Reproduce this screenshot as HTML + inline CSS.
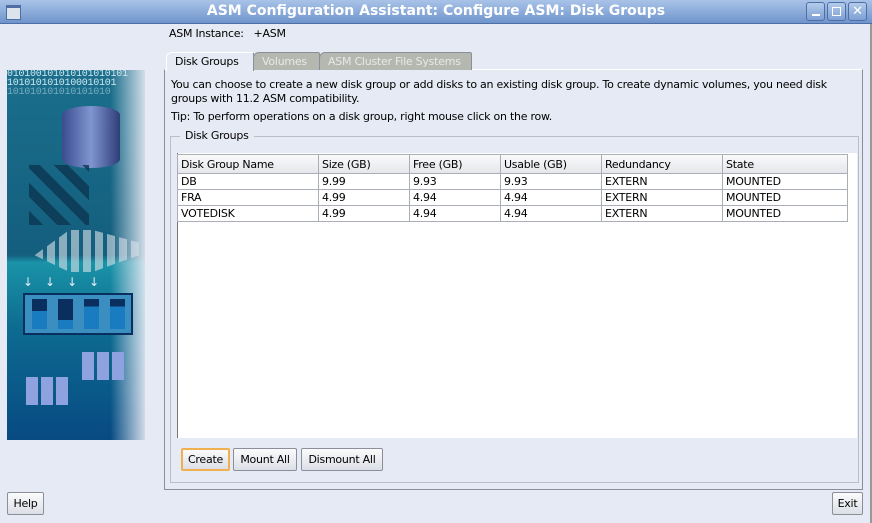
<!DOCTYPE html><html><head><style>
body{margin:0;width:872px;height:523px;background:#e6eaf4;font-family:"DejaVu Sans","Liberation Sans",sans-serif;font-size:11px;letter-spacing:-0.25px;color:#000;position:relative;overflow:hidden}
.a{position:absolute;white-space:nowrap}
.tb{left:0;top:0;width:872px;height:23px;background:linear-gradient(#a9c3e8,#6f94cc);border-bottom:1px solid #4d6fa6}
.tt{left:0;width:872px;top:3px;text-align:center;color:#fff;font-weight:bold;font-size:14px;letter-spacing:0}
.wb{top:2px;width:17px;height:17px;border:1px solid #4d6fa6;border-radius:3px;background:linear-gradient(#b4cbeb,#7d9fd3)}
.btn{border:1px solid #8a8f99;border-radius:2px;background:linear-gradient(#fbfbfc,#dcdfe6);height:21px;line-height:21px;text-align:center;font-size:11px}
.tab{top:52px;height:17px;line-height:17px;border:1px solid #8a8f99;border-bottom:none;background:#b5b8b0;color:#e8e8e8;padding:0 8px;border-radius:6px 2px 0 0}
table{border-collapse:collapse;position:absolute;left:177px;top:154px;font-size:11px}
td{border:1px solid #a9aeb8;height:15px;padding:0 3px;line-height:15px;white-space:nowrap}
</style></head><body>
<div class="a tb"></div>
<div class="a" style="left:6px;top:5px;width:13px;height:11px;border:1px solid #4d6fa6;background:#dde3ea;border-top:3px solid #4d6fa6"></div>
<div class="a tt">ASM Configuration Assistant: Configure ASM: Disk Groups</div>
<div class="a wb" style="left:806px"><div class="a" style="left:5px;top:11px;width:8px;height:2px;background:#fff"></div></div>
<div class="a wb" style="left:827px"><div class="a" style="left:4px;top:4px;width:7px;height:7px;border:1px solid #fff"></div></div>
<div class="a wb" style="left:848px;color:#fff;font-weight:bold;font-size:13px;text-align:center;line-height:17px">✕</div>
<div class="a" style="left:870px;top:24px;width:2px;height:499px;background:#999"></div>
<div class="a" style="left:169px;top:27px">ASM Instance:&nbsp;&nbsp; +ASM</div>
<!-- left image -->
<div class="a" style="left:7px;top:70px;width:138px;height:370px;background:linear-gradient(90deg,rgba(230,234,244,0) 75%,rgba(230,234,244,.9) 100%),linear-gradient(#1a6f8c 0%,#145e7e 50%,#1a93a8 52%,#0d6b90 70%,#074a82 100%)">
<div class="a" style="left:0;top:0;width:138px;font-family:'Liberation Mono',monospace;font-size:10px;color:#cfe8f0;line-height:9px;overflow:hidden;white-space:nowrap">010100101010101010101<br>1010101010100010101<br><span style="opacity:.5">101010101010101010</span></div>
<div class="a" style="left:55px;top:36px;width:58px;height:62px;border-radius:29px/9px;background:linear-gradient(90deg,#3a4c8f,#7f95d0 50%,#2e3d78)"></div>
<div class="a" style="left:22px;top:95px;width:60px;height:60px;background:repeating-linear-gradient(45deg,#0b3550 0 10px,transparent 10px 20px);opacity:.8"></div>
<div class="a" style="left:16px;top:160px;width:116px;height:42px;background:repeating-linear-gradient(90deg,#d8e2e8 0 8px,transparent 8px 12px);opacity:.6;clip-path:polygon(40% 0,60% 0,100% 30%,100% 60%,60% 100%,40% 100%,10% 60%)"></div>
<div class="a" style="left:16px;top:205px;width:116px;height:16px;color:#e6eef6;font-size:12px;letter-spacing:12px">↓↓↓↓</div>
<div class="a" style="left:16px;top:223px;width:106px;height:38px;background:#3a8ec0;border:2px solid #0a2e5e">
<div class="a" style="left:7px;top:4px;width:15px;height:30px;background:linear-gradient(#0a2e5e 40%,#1a7cc0 40%)"></div>
<div class="a" style="left:33px;top:4px;width:15px;height:30px;background:linear-gradient(#0a2e5e 70%,#1a7cc0 70%)"></div>
<div class="a" style="left:59px;top:4px;width:15px;height:30px;background:linear-gradient(#0a2e5e 25%,#1a7cc0 25%)"></div>
<div class="a" style="left:85px;top:4px;width:15px;height:30px;background:linear-gradient(#0a2e5e 25%,#1a7cc0 25%)"></div></div>
<div class="a" style="left:75px;top:282px;width:45px;height:28px;background:repeating-linear-gradient(90deg,#8ea2e0 0 12px,transparent 12px 15px)"></div>
<div class="a" style="left:19px;top:307px;width:45px;height:28px;background:repeating-linear-gradient(90deg,#8ea2e0 0 12px,transparent 12px 15px)"></div>
</div>
<!-- tabs -->
<div class="a" style="left:164px;top:69px;width:697px;height:419px;border:1px solid #8a8f99;border-top-color:#fff"></div>
<div class="a tab" style="left:319px;width:135px">ASM Cluster File Systems</div>
<div class="a tab" style="left:253px;width:49px">Volumes</div>
<div class="a tab" style="left:166px;width:70px;background:#e6eaf4;color:#000;height:18px;border-color:#fff #8a8f99 #fff #fff">Disk Groups</div>
<div class="a" style="left:171px;top:78px;line-height:14px;width:685px;white-space:normal">You can choose to create a new disk group or add disks to an existing disk group. To create dynamic volumes, you need disk groups with 11.2 ASM compatibility.</div>
<div class="a" style="left:171px;top:110px">Tip: To perform operations on a disk group, right mouse click on the row.</div>
<div class="a" style="left:170px;top:136px;width:687px;height:345px;border:1px solid #b9bec7"></div>
<div class="a" style="left:180px;top:129px;background:#e6eaf4;padding:0 5px">Disk Groups</div>
<div class="a" style="left:177px;top:153px;width:679px;height:285px;background:#fff;border-left:1px solid #777"></div>
<table>
<tr style="background:linear-gradient(#fafafa,#e3e5ea)"><td style="width:134px;height:18px">Disk Group Name</td><td style="width:84px">Size (GB)</td><td style="width:84px">Free (GB)</td><td style="width:94px">Usable (GB)</td><td style="width:114px">Redundancy</td><td style="width:118px">State</td></tr>
<tr><td>DB</td><td>9.99</td><td>9.93</td><td>9.93</td><td>EXTERN</td><td>MOUNTED</td></tr>
<tr><td>FRA</td><td>4.99</td><td>4.94</td><td>4.94</td><td>EXTERN</td><td>MOUNTED</td></tr>
<tr><td>VOTEDISK</td><td>4.99</td><td>4.94</td><td>4.94</td><td>EXTERN</td><td>MOUNTED</td></tr>
</table>
<div class="a btn" style="left:181px;top:448px;width:45px;border:2px solid #f0b050;height:19px;line-height:19px">Create</div>
<div class="a btn" style="left:233px;top:448px;width:62px">Mount All</div>
<div class="a btn" style="left:301px;top:448px;width:80px">Dismount All</div>
<div class="a btn" style="left:7px;top:492px;width:35px">Help</div>
<div class="a btn" style="left:832px;top:492px;width:29px">Exit</div>
</body></html>
